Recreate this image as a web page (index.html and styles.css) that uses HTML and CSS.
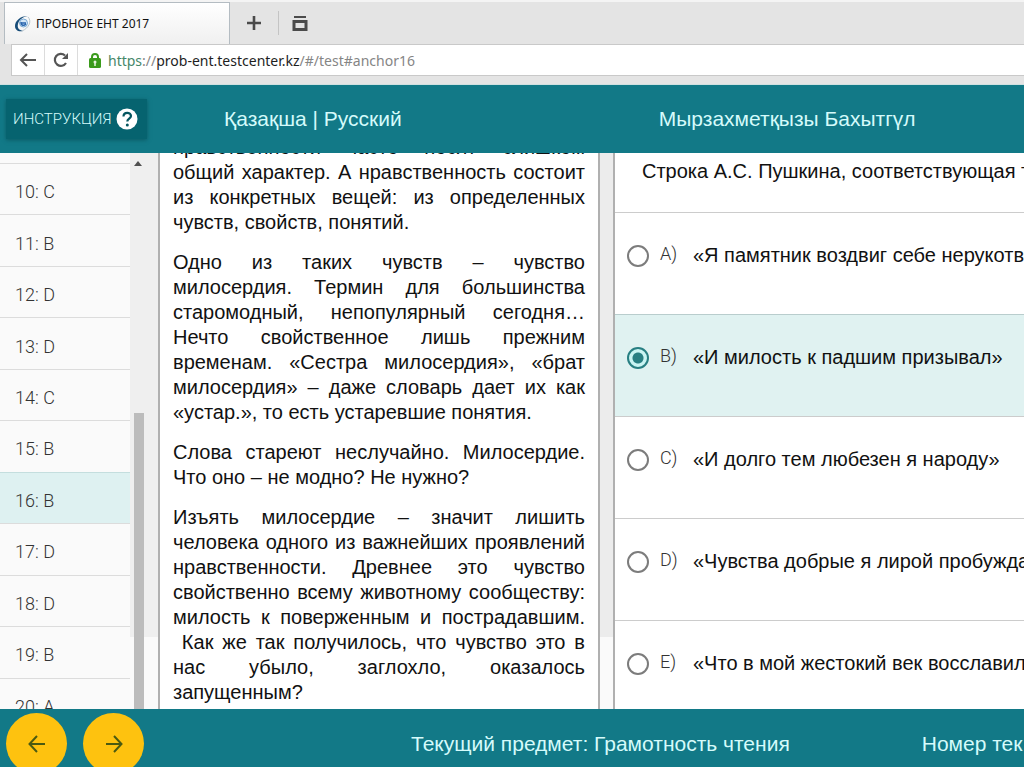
FILE: index.html
```html
<!DOCTYPE html>
<html lang="ru">
<head>
<meta charset="utf-8">
<title>ПРОБНОЕ ЕНТ 2017</title>
<link rel="stylesheet" href="styles.css">
</head>
<body>
<div class="chrome">
  <div class="tabs">
    <div class="tab">
      <svg class="tab-icon" width="18" height="18" viewBox="0 0 18 18"><path d="M14 1C6 1 1 6 1 11c0 4 3 6 8 5C5 15 3 13 4 9c1-4 4-7 10-8z" fill="#174c78"/><circle cx="9.500" cy="8" r="4" fill="#d4e7f7" stroke="#79a9d3"/><path d="M7 8h5M7 7c0 4 3 4 5 2" fill="none" stroke="#2a66ae" stroke-width="1.500"/><path d="M14 2c4 4 1 11-6 14" fill="none" stroke="#b6c4cc"/></svg>
      <span>ПРОБНОЕ ЕНТ 2017</span>
    </div>
    <button class="icon-button new-tab" aria-label="Новая вкладка"><svg width="14" height="14" viewBox="0 0 14 14"><path d="M7 0v14M0 7h14" stroke="#4b4b4b" stroke-width="2.600"/></svg></button>
    <button class="icon-button tab-list" aria-label="Вкладки"><svg width="16" height="15" viewBox="0 0 16 15"><path d="M2 1h12" stroke="#4b4b4b" stroke-width="2"/><path d="M2 5.500h12v8H2z" fill="none" stroke="#4b4b4b" stroke-width="3"/></svg></button>
  </div>
  <div class="address-bar">
    <button class="icon-button nav" aria-label="Назад"><svg width="18" height="14" viewBox="0 0 18 14"><path d="M17 7H2M8 1L2 7l6 6" fill="none" stroke="#555" stroke-width="2"/></svg></button>
    <button class="icon-button nav" aria-label="Обновить"><svg width="18" height="18" viewBox="0 0 18 18"><path d="M13 4.500A6 6 0 1 0 14 12" fill="none" stroke="#555" stroke-width="2.200"/><path d="M16 2v6h-6z" fill="#555"/></svg></button>
    <svg class="lock" width="12" height="15" viewBox="0 0 12 15"><path d="M3 7V4a3 3 0 0 1 6 0v3" fill="none" stroke="#3b9b1c" stroke-width="2"/><rect y="5" width="12" height="10" rx="1.500" fill="#3b9b1c"/><circle cx="6" cy="9" r="1.500" fill="#e8f6df"/><path d="M6 9v4" stroke="#e8f6df" stroke-width="1.500"/></svg>
    <div class="url"><span class="scheme">https</span>://<span class="host">prob-ent.testcenter.kz</span>/#/test#anchor16</div>
  </div>
</div>

<header class="header">
  <button class="instruction">ИНСТРУКЦИЯ<svg width="22" height="22" viewBox="0 0 22 22"><circle cx="11" cy="11" r="10.500" fill="#fff"/><path d="M7.500 8.500c0-5 7.500-4.500 7.500-.5 0 2.600-3.700 2.800-3.700 5.500" fill="none" stroke="#04555f" stroke-width="2.200"/><circle cx="11.300" cy="17" r="1.500" fill="#04555f"/></svg></button>
  <nav class="languages"><a href="#kz">Қазақша</a> | <a href="#ru">Русский</a></nav>
  <div class="student">Мырзахметқызы Бахытгүл</div>
</header>

<main class="main">
  <nav class="questions">
    <a href="#10">10: C</a><a href="#11">11: B</a><a href="#12">12: D</a><a href="#13">13: D</a><a href="#14">14: C</a><a href="#15">15: B</a><a class="current" href="#16">16: B</a><a href="#17">17: D</a><a href="#18">18: D</a><a href="#19">19: B</a><a href="#20">20: A</a>
  </nav>
  <div class="scrollbar">
    <svg width="8" height="5" viewBox="0 0 8 5"><path d="M4 0l4 5H0z" fill="#505050"/></svg>
    <div class="thumb"></div>
  </div>
  <article class="passage">
    <div class="passage-text">
      <p>нравственности часто носят слишком общий характер. А нравственность состоит из конкретных вещей: из определенных чувств, свойств, понятий.</p>
      <p>Одно из таких чувств – чувство милосердия. Термин для большинства старомодный, непопулярный сегодня… Нечто свойственное лишь прежним временам. «Сестра милосердия», «брат милосердия» – даже словарь дает их как «устар.», то есть устаревшие понятия.</p>
      <p>Слова стареют неслучайно. Милосердие. Что оно – не модно? Не нужно?</p>
      <p>Изъять милосердие – значит лишить человека одного из важнейших проявлений нравственности. Древнее это чувство свойственно всему животному сообществу: милость к поверженным и пострадавшим. &nbsp;Как же так получилось, что чувство это в нас убыло, заглохло, оказалось запущенным?</p>
    </div>
  </article>
  <div class="gutter"></div>
  <section class="task">
    <div class="prompt">Строка А.С. Пушкина, соответствующая т</div>
    <label class="option"><input type="radio" name="answer"><span class="letter">A)</span><span>«Я памятник воздвиг себе нерукотв</span></label>
    <label class="option selected"><input type="radio" name="answer" checked><span class="letter">B)</span><span>«И милость к падшим призывал»</span></label>
    <label class="option"><input type="radio" name="answer"><span class="letter">C)</span><span>«И долго тем любезен я народу»</span></label>
    <label class="option"><input type="radio" name="answer"><span class="letter">D)</span><span>«Чувства добрые я лирой пробужда</span></label>
    <label class="option"><input type="radio" name="answer"><span class="letter">E)</span><span>«Что в мой жестокий век восславил</span></label>
  </section>
</main>

<footer class="footer">
  <button class="round" aria-label="Предыдущий"><svg width="18" height="18" viewBox="0 0 18 18"><path d="M17 9H2M9 1L1.500 9 9 17" fill="none" stroke="#4a5a12" stroke-width="2"/></svg></button>
  <button class="round" aria-label="Следующий"><svg width="18" height="18" viewBox="0 0 18 18"><path d="M1 9h15M9 1l7.500 8L9 17" fill="none" stroke="#4a5a12" stroke-width="2"/></svg></button>
  <div class="subject">Текущий предмет: Грамотность чтения</div>
  <div class="number">Номер тек</div>
</footer>
</body>
</html>
```
FILE: styles.css
```css
* { box-sizing: border-box; }
body {
  margin: 0;
  height: 100vh;
  display: flex;
  flex-direction: column;
  overflow: hidden;
  font-family: "Liberation Sans", Arial, sans-serif;
  font-size: 20px;
  color: #111;
  background: #fff;
}
button { font: inherit; border: 0; padding: 0; background: none; }
a { color: inherit; text-decoration: none; }
svg { display: block; flex: none; }

.chrome {
  flex: none;
  background: #e4e4e4;
  border-top: 2px solid #f4f4f4;
  border-bottom: 1px solid #cfe0e0;
  padding: 0 0 8px 4px;
  font-family: "Noto Sans", "Open Sans", sans-serif;
}
.tabs { display: flex; height: 42px; }
.tab {
  display: flex;
  align-items: center;
  gap: 4px;
  width: 226px;
  padding-left: 9px;
  font-size: 12px;
  color: #111;
  background: linear-gradient(#fff, #f0f0f0);
  border: 1px solid #b4bcc2;
  border-bottom: 0;
  white-space: nowrap;
}
.icon-button { display: flex; align-items: center; justify-content: center; }
.new-tab { width: 48px; }
.tab-list { width: 43px; height: 24px; align-self: center; border-left: 1px solid #c4c4c4; }
.address-bar {
  display: flex;
  align-items: center;
  margin-left: 7px;
  height: 32px;
  background: #fff;
  border: 1px solid #c9c9c9;
  border-right: 0;
}
.nav { width: 33px; height: 30px; border-right: 1px solid #dcdcdc; }
.lock { margin: 0 7px 0 11px; }
.url { font-size: 14px; color: #858585; white-space: nowrap; }
.scheme { color: #46876a; }
.host { color: #1e1e1e; }

.header, .footer {
  flex: none;
  display: flex;
  align-items: center;
  overflow: hidden;
  background: #127987;
  color: #d5fbfb;
  font-size: 21px;
  white-space: nowrap;
}
.header { height: 68px; padding-left: 6px; }
.instruction {
  display: flex;
  align-items: center;
  gap: 4px;
  width: 141px;
  height: 40px;
  padding-left: 7px;
  background: #06636f;
  box-shadow: 0 1px 4px #0b5963;
  color: #d5fbfb;
  font-family: Roboto, sans-serif;
  font-weight: 300;
  font-size: 15px;
}
.languages { margin-left: 77px; }
.student { margin-left: 257px; }

.main { flex: 1; min-height: 0; display: flex; overflow: hidden; }
.questions {
  flex: none;
  display: flex;
  flex-direction: column;
  width: 130px;
  padding-top: 10px;
  margin-bottom: -20px;
  background: #fafafa;
}
.questions a {
  flex: 1;
  display: flex;
  align-items: center;
  padding: 5px 0 0 15px;
  border-top: 1px solid #dcdcdc;
  font-family: Roboto, sans-serif;
  font-weight: 300;
  font-size: 18px;
  color: #333;
}
.questions .current { background: #def1f1; border-color: #c4dede; }
.scrollbar {
  flex: none;
  display: flex;
  flex-direction: column;
  justify-content: space-between;
  width: 30px;
  padding: 8px 0 0 4px;
  background: linear-gradient(#efefef 87%, #fafafa 87%);
  border-right: 2px solid #b0b0b0;
}
.thumb { width: 10px; height: 54%; background: #bcbcbc; }
.passage { flex: none; width: 438px; padding: 0 13px; overflow: hidden; }
.passage-text { margin-top: -18px; }
.passage p { margin: 0 0 15px; line-height: 25px; text-align: justify; }
.gutter {
  flex: none;
  width: 17px;
  background: linear-gradient(#ececec 87%, #fafafa 87%);
  border: solid #b0b0b0;
  border-width: 0 2px;
}
.task { flex: 1; min-width: 0; overflow: hidden; white-space: nowrap; }
.prompt { height: 59px; padding: 7px 0 0 27px; }
.option {
  display: flex;
  align-items: center;
  height: 102px;
  padding: 0 0 16px 12px;
  border-top: 1px solid #ccc;
}
.selected { background: #e0f2f1; border-color: #b9cdcd; }
.option input {
  appearance: none;
  flex: none;
  width: 22px;
  height: 22px;
  margin: 0;
  border: 2px solid #7c7c7c;
  border-radius: 50%;
}
.option input:checked {
  border-color: #287f82;
  background: radial-gradient(circle, #287f82 5px, #c9f4f2 6px);
}
.letter {
  flex: none;
  width: 33px;
  margin-left: 11px;
  padding-bottom: 5px;
  font-family: Roboto, sans-serif;
  font-weight: 300;
  font-size: 18px;
  color: #333;
}

.footer { height: 58px; padding: 4px 0 0 6px; align-items: flex-start; }
.round {
  flex: none;
  display: flex;
  align-items: center;
  justify-content: center;
  width: 61px;
  height: 61px;
  margin-right: 16px;
  border-radius: 50%;
  background: #fec20f;
}
.subject { margin: 19px 0 0 251px; }
.number { margin: 19px 0 0 132px; }
```
